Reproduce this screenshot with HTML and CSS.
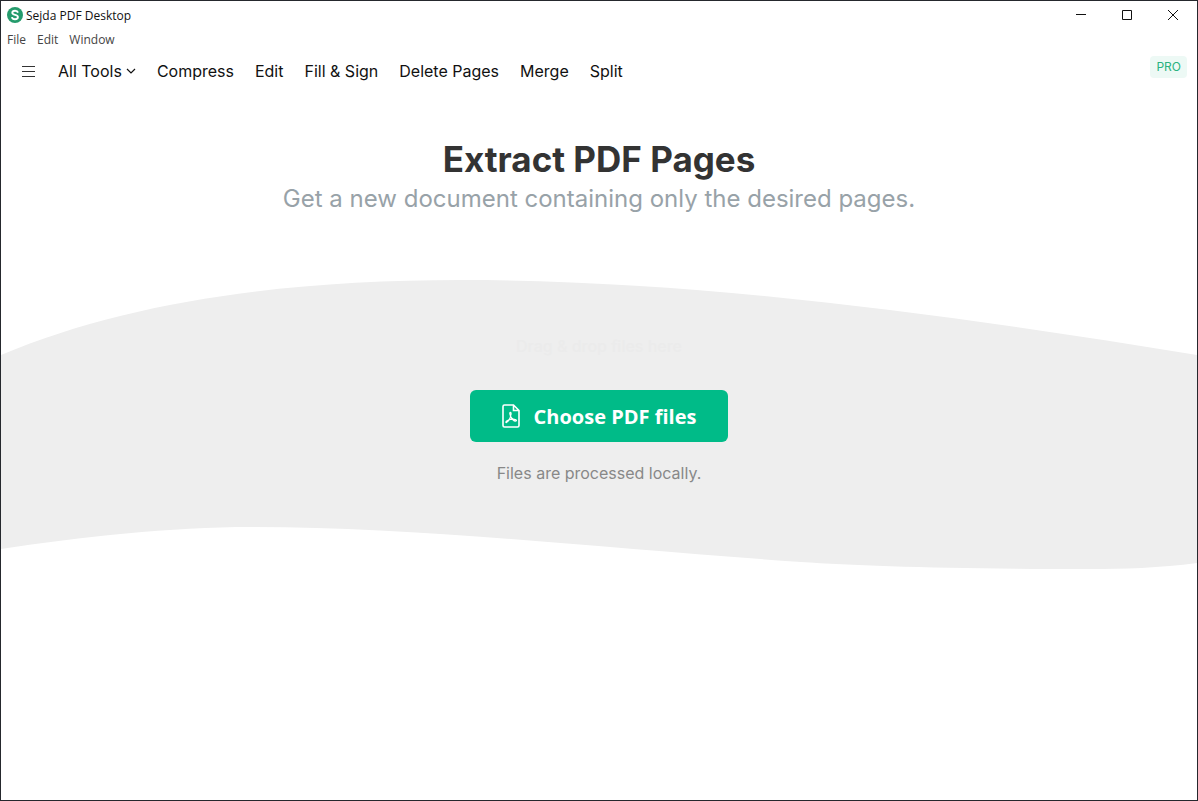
FILE: index.html
```html
<!DOCTYPE html>
<html lang="en">
<head>
    <meta charset="UTF-8">
    <meta name="viewport" content="width=device-width, initial-scale=1.0">
    <title>Sejda PDF Desktop</title>
    <link rel="stylesheet" href="styles.css">
</head>
<body>
    <div class="window">
        <header class="titlebar">
            <svg class="logo" viewBox="0 0 16 16" aria-hidden="true">
                <circle cx="8" cy="8" r="8" fill="#259b6c"/>
                <path d="M11 5.6C10.6 4.3 9.500 3.700 8.100 3.700C6.500 3.700 5.300 4.500 5.300 5.700C5.300 8.600 10.900 7.100 10.900 10.100C10.900 11.500 9.600 12.300 8 12.300C6.300 12.300 5.200 11.500 4.900 10.100" fill="none" stroke="#fff" stroke-width="1.900"/>
            </svg>
            <span class="app-name">Sejda PDF Desktop</span>
            <div class="window-controls">
                <button class="control" aria-label="Minimize">
                    <svg viewBox="0 0 12 12"><path d="M1 5.500H11"/></svg>
                </button>
                <button class="control" aria-label="Maximize">
                    <svg viewBox="0 0 12 12"><path d="M1.500 1.500H10.500V10.500H1.500Z"/></svg>
                </button>
                <button class="control" aria-label="Close">
                    <svg viewBox="0 0 12 12"><path d="M1 1L11 11M11 1L1 11"/></svg>
                </button>
            </div>
        </header>

        <div class="menubar">
            <button class="menu">File</button>
            <button class="menu">Edit</button>
            <button class="menu">Window</button>
        </div>

        <nav class="toolbar">
            <button class="sidebar-btn" aria-label="Menu">
                <svg viewBox="0 0 14 12"><path d="M1 1.500H14M1 6.500H14M1 11.500H14"/></svg>
            </button>
            <a class="tool" href="#">All Tools
                <svg class="chevron" viewBox="0 0 10 6"><path d="M1 1L5 5L9 1"/></svg>
            </a>
            <a class="tool" href="#">Compress</a>
            <a class="tool" href="#">Edit</a>
            <a class="tool" href="#">Fill &amp; Sign</a>
            <a class="tool" href="#">Delete Pages</a>
            <a class="tool" href="#">Merge</a>
            <a class="tool" href="#">Split</a>
            <span class="pro">PRO</span>
        </nav>

        <main>
            <h1>Extract PDF Pages</h1>
            <p class="subtitle">Get a new document containing only the desired pages.</p>
            <section class="dropzone">
                <svg class="wave" viewBox="0 0 1196 289" preserveAspectRatio="none" aria-hidden="true">
                    <path d="M0 75C130 20 290 0 460 0C700 0 950 35 1196 75V283C1160 288 1120 289 1090 289C950 289 860 286 800 282C600 268 420 247 250 247C170 247 80 257 0 269Z" fill="#eee"/>
                </svg>
                <p class="drag-hint">Drag &amp; drop files here</p>
                <button class="choose-btn">
                    <svg class="pdf-icon" viewBox="0 0 18 24" aria-hidden="true">
                        <path d="M2.500 1H11.500L17 6.500V21.500Q17 23 15.500 23H2.500Q1 23 1 21.500V2.500Q1 1 2.500 1ZM11.500 1V6.500H17"/>
                        <path d="M8.300 8.300C7.300 8.500 7.900 11 9 13.100C10 15 11.600 16.900 13.400 17.100C15 17.200 14.800 15.500 12.700 15.300C10.200 15 7 15.700 5 16.800C3.300 17.800 3.600 19.300 5 18.100C6.700 16.700 8.600 12.900 9 10.500C9.200 9 9 8.200 8.300 8.300Z" stroke-width="1.200"/>
                    </svg>
                    Choose PDF files
                </button>
                <p class="note">Files are processed locally.</p>
            </section>
        </main>
    </div>
</body>
</html>
```
FILE: styles.css
```css
*{
    margin: 0;
    padding: 0;
    box-sizing: border-box;
}
body{
    background-color: #fff;
    font-family: Inter, "Liberation Sans", sans-serif;
}
button{
    border: none;
    background: none;
    font-family: inherit;
    cursor: pointer;
}
svg{
    fill: none;
    stroke: currentColor;
}
.window{
    min-height: 100vh;
    border: 1px solid #25282d;
}
.titlebar{
    display: flex;
    align-items: center;
    height: 28px;
    padding: 0 1px 0 6px;
    gap: 3px;
    font-family: "Open Sans", sans-serif;
    font-size: 12px;
    color: #111;
}
.logo{
    width: 16px;
    height: 16px;
    stroke: none;
}
.window-controls{
    display: flex;
    margin-left: auto;
}
.control{
    display: flex;
    justify-content: center;
    align-items: center;
    width: 46px;
    height: 28px;
    color: #111;
}
.control svg{
    width: 12px;
    height: 12px;
}
.menubar{
    display: flex;
    height: 20px;
    padding-left: 6px;
    gap: 11px;
}
.menu{
    font-family: "Open Sans", sans-serif;
    font-size: 12px;
    line-height: 22px;
    color: #444;
}
.toolbar{
    display: flex;
    align-items: center;
    height: 44px;
    padding: 0 10px 0 20px;
    gap: 21px;
}
.sidebar-btn{
    display: flex;
    width: 16px;
    color: #333;
}
.sidebar-btn svg{
    width: 14px;
    height: 12px;
}
.tool{
    display: flex;
    align-items: center;
    gap: 4px;
    font-size: 16px;
    color: #111;
    text-decoration: none;
}
.chevron{
    width: 10px;
    height: 6px;
    stroke-width: 1.2;
}
.pro{
    align-self: flex-start;
    margin: 7px 0 0 auto;
    padding: 0 6px;
    border-radius: 4px;
    background-color: #edf9f5;
    font-size: 12px;
    line-height: 22px;
    color: #2ab37f;
}
main{
    text-align: center;
}
h1{
    padding-top: 44px;
    font-size: 35px;
    line-height: 44px;
    color: #333;
}
.subtitle{
    font-size: 24px;
    line-height: 36px;
    color: #98a2a8;
}
.dropzone{
    position: relative;
    display: flex;
    flex-direction: column;
    align-items: center;
    height: 289px;
    margin-top: 63px;
    padding-top: 55px;
}
.wave{
    position: absolute;
    top: 0;
    left: 0;
    z-index: -1;
    width: 100%;
    height: 100%;
    stroke: none;
}
.drag-hint{
    font-size: 16px;
    font-weight: 500;
    line-height: 22px;
    color: #ebebeb;
}
.choose-btn{
    display: flex;
    align-items: center;
    height: 52px;
    margin-top: 33px;
    padding: 0 32px;
    gap: 14px;
    border-radius: 6px;
    background-color: #00bb88;
    font-family: "Open Sans", sans-serif;
    font-size: 20px;
    font-weight: bold;
    color: #fff;
}
.pdf-icon{
    width: 18px;
    height: 24px;
    stroke-width: 1.6;
}
.note{
    margin-top: 19px;
    font-size: 16px;
    line-height: 24px;
    color: #888;
}
```
